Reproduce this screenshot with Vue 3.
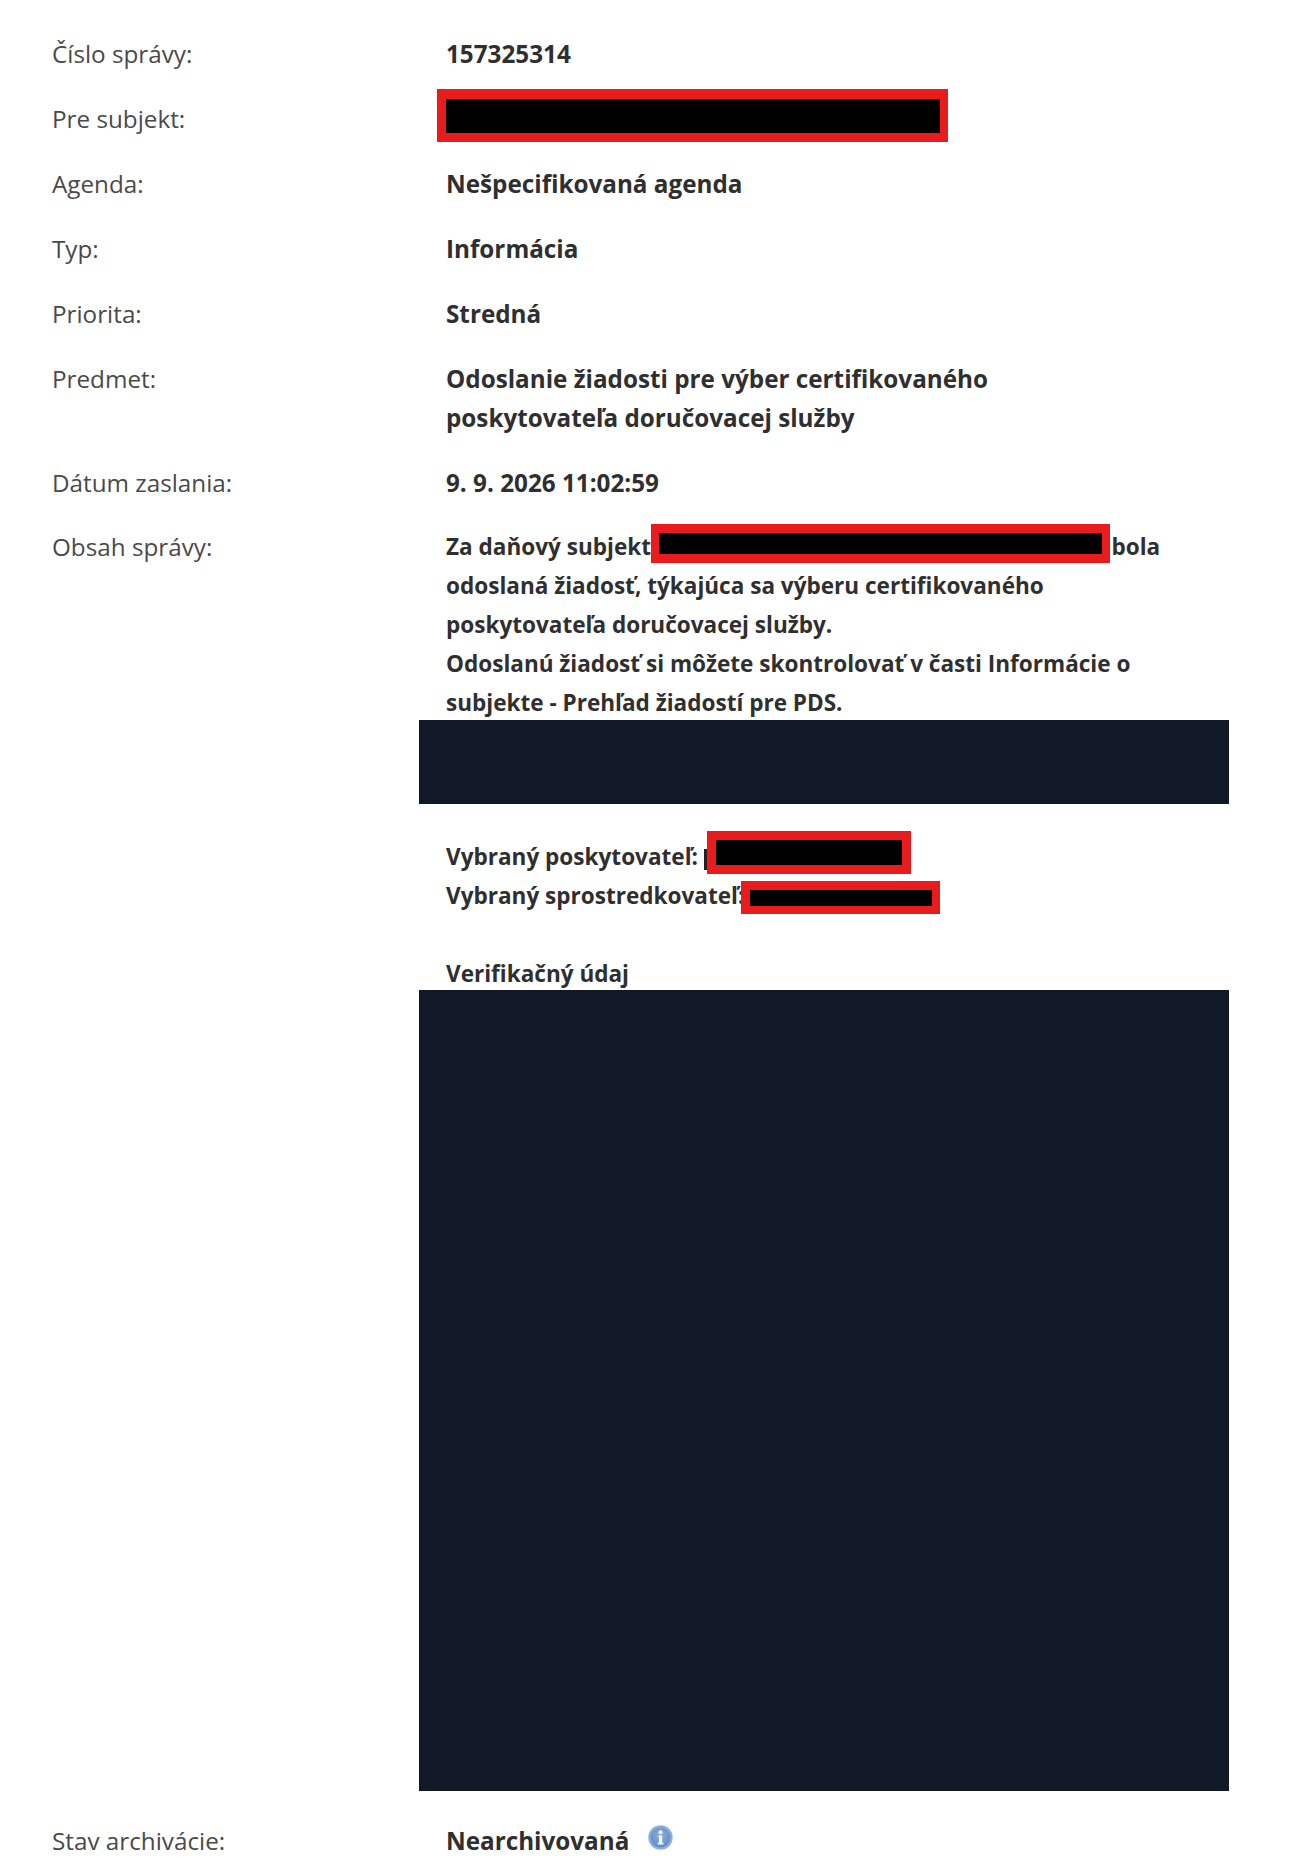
<script setup>
const simpleRows = [
  { label: 'Agenda:', value: 'Nešpecifikovaná agenda' },
  { label: 'Typ:', value: 'Informácia' },
  { label: 'Priorita:', value: 'Stredná' },
]
</script>

<template>
  <main class="page">
    <dl class="details">
      <div class="row">
        <dt>Číslo správy:</dt>
        <dd>157325314</dd>
      </div>
      <div class="row">
        <dt>Pre subjekt:</dt>
        <dd class="anchored"><span class="redact redact-subject"></span>&nbsp;</dd>
      </div>
      <div v-for="row in simpleRows" :key="row.label" class="row">
        <dt>{{ row.label }}</dt>
        <dd>{{ row.value }}</dd>
      </div>
      <div class="row">
        <dt>Predmet:</dt>
        <dd>Odoslanie žiadosti pre výber certifikovaného<br />poskytovateľa doručovacej služby</dd>
      </div>
      <div class="row">
        <dt>Dátum zaslania:</dt>
        <dd>9. 9. 2026 11:02:59</dd>
      </div>
      <div class="row row-message">
        <dt>Obsah správy:</dt>
        <dd class="message">
          <div>Za daňový subjekt<span class="slot slot-long"><span class="redact redact-long"></span></span>bola<br />odoslaná žiadosť, týkajúca sa výberu certifikovaného<br />poskytovateľa doručovacej služby.<br />Odoslanú žiadosť si môžete skontrolovať v časti Informácie o<br />subjekte - Prehľad žiadostí pre PDS.</div>
          <div class="block block-short"></div>
          <div class="chosen">
            <div class="anchored">Vybraný poskytovateľ:<span class="redact redact-provider"></span><span class="sliver"></span></div>
            <div class="anchored">Vybraný sprostredkovateľ:<span class="redact redact-broker"></span></div>
          </div>
          <div class="verify">Verifikačný údaj</div>
          <div class="block block-tall"></div>
        </dd>
      </div>
      <div class="row row-last">
        <dt>Stav archivácie:</dt>
        <dd class="status">
          Nearchivovaná
          <svg class="info" viewBox="0 0 25 25" aria-hidden="true">
            <defs>
              <radialGradient id="infoFill" cx="50%" cy="40%" r="60%">
                <stop offset="0%" stop-color="#8fb2dc" />
                <stop offset="100%" stop-color="#5f8cc6" />
              </radialGradient>
            </defs>
            <circle cx="12.5" cy="12.5" r="12.2" fill="#8eafd9" />
            <circle cx="12.5" cy="12.5" r="10" fill="url(#infoFill)" />
            <circle cx="12.5" cy="7.2" r="2" fill="#f4f8fc" />
            <path d="M10.4 10.6h3.8v7.2h1.2v1.7H9.8v-1.7h1.2v-5.5h-.6z" fill="#f4f8fc" />
          </svg>
        </dd>
      </div>
    </dl>
  </main>
</template>

<style scoped>
.page {
  width: 1300px;
  height: 1863px;
  overflow: hidden;
  background: #fff;
  box-sizing: border-box;
  padding: 34px 0 0 52px;
  font-family: "Open Sans", "Liberation Sans", sans-serif;
  font-size: 24.25px;
  line-height: 39px;
  color: #333;
}
.details {
  margin: 0;
  display: flex;
  flex-direction: column;
  gap: 26px;
}
.row {
  display: grid;
  grid-template-columns: 394px 785px;
}
.row-message {
  margin-top: -1px;
}
dt {
  color: #4a4a4a;
  font-weight: 400;
}
dd {
  margin: 0;
  font-weight: 700;
  color: #2f2f2f;
}
.message {
  font-size: 22.55px;
}
.anchored {
  position: relative;
}
.slot {
  display: inline-block;
  position: relative;
  height: 0;
}
.slot-long {
  width: 460.5px;
}
.redact {
  position: absolute;
  box-sizing: border-box;
  background: #000;
  border: solid #e81c1c;
}
.redact-subject {
  left: -9px;
  top: -10px;
  width: 511px;
  height: 53px;
  border-width: 10px 8px 9px 9px;
}
.redact-long {
  left: 0;
  top: -31px;
  width: 459px;
  height: 39px;
  border-width: 9px 8px 9px 8px;
}
.redact-provider {
  left: 261px;
  top: -6px;
  width: 204px;
  height: 43px;
  border-width: 9px;
}
.redact-broker {
  left: 295px;
  top: 5px;
  width: 199px;
  height: 33px;
  border-width: 9px 8px 8px 9px;
}
.sliver {
  position: absolute;
  left: 258px;
  top: 12px;
  width: 3px;
  height: 21px;
  background: #222;
}
.block {
  margin-left: -27px;
  width: 810px;
  background: #111827;
}
.block-short {
  height: 84px;
  margin-top: -2px;
}
.block-tall {
  height: 801px;
  margin-top: -3px;
}
.chosen {
  margin-top: 33px;
}
.verify {
  margin-top: 39px;
}
.row-last {
  margin-top: 4px;
}
.status {
  display: flex;
  align-items: flex-start;
  gap: 19px;
}
.info {
  width: 25px;
  height: 25px;
  margin-top: 4px;
  flex: none;
}
</style>

<style>
html,
body {
  background: #fff;
}
</style>
